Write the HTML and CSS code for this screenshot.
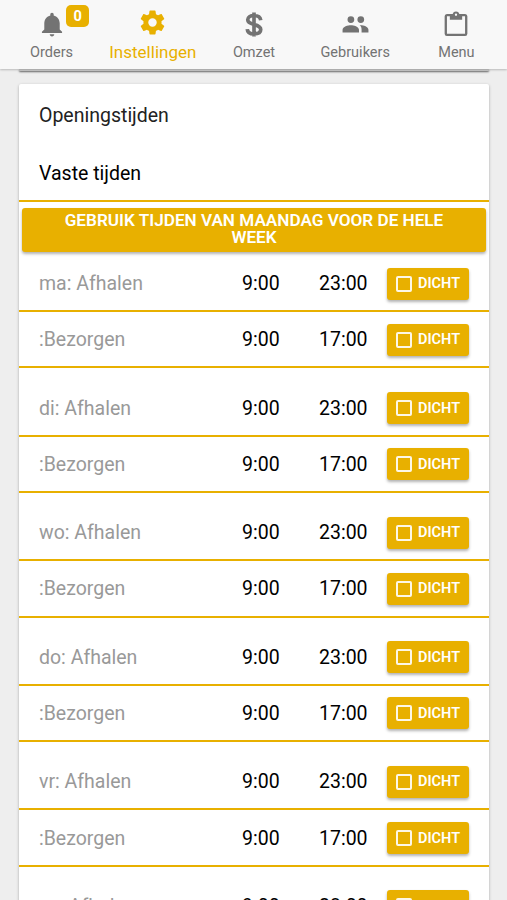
FILE: index.html
```html
<!DOCTYPE html>
<html lang="nl">
<head>
<meta charset="utf-8">
<meta name="viewport" content="width=device-width, initial-scale=1">
<title>Instellingen</title>
<link rel="stylesheet" href="styles.css">
</head>
<body>
<nav class="tabs">
  <a class="tab"><span class="icon-wrap"><svg class="icon bell" viewBox="0 0 512 512"><path d="M256 464c22.800 0 41-18 41-41h-82c0 23 18.200 41 41 41zM397 339V224c0-72-48-129-110-144V64c0-18-13-31-31-31s-31 13-31 31v16c-62 15-110 72-110 144v115l-43 42v20h368v-20z"/></svg><b class="badge">0</b></span><span class="label">Orders</span></a>
  <a class="tab active"><svg class="icon" viewBox="0 0 24 24"><path d="M19.430 12.980c.04-.32.07-.64.07-.98s-.03-.66-.07-.98l2.110-1.650c.19-.15.24-.42.12-.64l-2-3.460c-.12-.22-.39-.3-.61-.22l-2.490 1c-.52-.4-1.080-.73-1.690-.98l-.38-2.650C14.460 2.180 14.250 2 14 2h-4c-.25 0-.46.18-.49.42l-.38 2.650c-.61.25-1.170.59-1.690.98l-2.490-1c-.23-.09-.49 0-.61.22l-2 3.460c-.13.22-.07.49.12.64l2.110 1.650c-.04.32-.07.65-.07.98s.03.66.07.98l-2.110 1.650c-.19.15-.24.42-.12.64l2 3.460c.12.22.39.3.61.22l2.490-1c.52.4 1.080.73 1.690.98l.38 2.650c.03.24.24.42.49.42h4c.25 0 .46-.18.49-.42l.38-2.650c.61-.25 1.170-.59 1.690-.98l2.490 1c.23.09.49 0 .61-.22l2-3.460c.12-.22.07-.49-.12-.64zM12 15.500a3.500 3.500 0 1 1 0-7 3.500 3.500 0 0 1 0 7z"/></svg><span class="label">Instellingen</span></a>
  <a class="tab"><svg class="icon dollar" viewBox="0 0 24 28"><path d="M12 1.500v25M19 9.500C18.500 6 15.700 4.700 12 4.700c-3.900 0-6.500 1.700-6.500 4.500 0 3 2.500 3.900 6.500 4.800 4.400 1 7 2.200 7 5.200s-2.700 4.500-7 4.500c-4.200 0-6.800-1.700-7-5"/></svg><span class="label">Omzet</span></a>
  <a class="tab"><svg class="icon people" viewBox="0 0 24 24"><path d="M16.700 11a3 3 0 1 0 0-6 3 3 0 0 0 0 6zM7.900 11a3 3 0 1 0 0-6 3 3 0 0 0 0 6zM7.900 13C5.300 13 .5 14.300 .5 17v2.500h14.600V17c0-2.700-4.800-4-7.200-4zM16.700 13c-.3 0-.6 0-1 .05 1.200.9 1.700 2.200 1.700 3.950v2.500h6.100V17c0-2.700-4.400-4-6.800-4z"/></svg><span class="label">Gebruikers</span></a>
  <a class="tab"><svg class="icon clip" viewBox="0 0 24 27"><path fill-rule="evenodd" d="M21.500 3h-6A3.600 3.600 0 0 0 12 .6 3.600 3.600 0 0 0 8.500 3h-6A2.400 2.400 0 0 0 .2 5.400v18.200A2.400 2.400 0 0 0 2.500 26h19a2.400 2.400 0 0 0 2.300-2.400V5.400A2.400 2.400 0 0 0 21.500 3zM12 2.700a1.200 1.200 0 1 1 0 2.400 1.200 1.200 0 0 1 0-2.400zM21.400 23.600H2.600V5.400h3V9h12.800V5.400h3z"/></svg><span class="label">Menu</span></a>
</nav>
<main class="content">
  <section class="card card-prev"></section>
  <section class="card">
    <h1 class="title">Openingstijden</h1>
    <h2 class="subtitle">Vaste tijden</h2>
    <button class="copy">GEBRUIK TIJDEN VAN MAANDAG VOOR DE HELE WEEK</button>
    <div id="days"></div>
  </section>
</main>
<script src="script.js"></script>
</body>
</html>
```
FILE: styles.css
```css
* { box-sizing: border-box; }
body {
  margin: 0;
  height: 900px;
  overflow: hidden;
  background: #eee;
  font-family: Roboto, sans-serif;
  color: #000;
}
.tabs {
  position: relative;
  z-index: 1;
  display: flex;
  height: 69px;
  padding-left: 1px;
  background: #f8f8f8;
  box-shadow: 0 1px 2px rgba(0, 0, 0, .22);
}
.tab {
  flex: 1 1 0;
  min-width: 0;
  display: flex;
  flex-direction: column;
  align-items: center;
  padding-top: 10px;
  color: #737373;
  font-size: 14.500px;
}
.icon { display: block; width: 28px; height: 28px; fill: currentColor; }
.icon-wrap { position: relative; padding-left: 1px; }
.bell { position: relative; top: 1px; }
.tab.active { color: #e8b000; font-size: 17px; }
.tab.active .icon { margin-top: -2px; width: 29px; height: 29px; }
.tab.active .label { margin-top: 5px; }
.dollar { margin-top: 1px; height: 27px; fill: none; stroke: currentColor; stroke-width: 3.8; }
.people { width: 27px; }
.clip { margin-top: 1px; height: 26px; margin-bottom: 1px; }
.label { margin-top: 5px; line-height: 20px; }
.badge {
  position: absolute;
  left: 29px;
  top: -5px;
  width: 23px;
  height: 22px;
  border-radius: 5px;
  background: #e8b000;
  color: #fff;
  font-size: 14.6px;
  font-weight: 700;
  line-height: 23px;
  text-align: center;
}
.content { padding: 0 18px 0 19px; }
.card {
  height: 940px;
  background: #fff;
  border-radius: 2px;
  box-shadow: 0 1px 3px rgba(0, 0, 0, .3);
}
.card-prev { height: 2px; margin-bottom: 13px; background: #ccc; box-shadow: 0 1px 2px rgba(0, 0, 0, .6); }
.title, .subtitle {
  margin: 0;
  padding: 0 20px;
  font-size: 19.500px;
  font-weight: 400;
}
.title { height: 62px; line-height: 63px; color: #222; }
.subtitle { height: 56px; line-height: 55px; border-bottom: 2px solid #e8b000; }
.copy {
  display: block;
  width: calc(100% - 6px);
  height: 44px;
  margin: 5.500px 3px 4.500px;
  padding: 0 36px 2px;
  border: 0;
  border-radius: 3px;
  background: #e8b000;
  box-shadow: 0 2px 3px rgba(0, 0, 0, .3);
  color: #fff;
  font: 600 17.150px/17px Roboto, sans-serif;
}
.row {
  display: grid;
  grid-template-columns: 1fr 77px 68px 82px;
  align-items: center;
  height: 56.200px;
  padding: 0 20px;
  border-bottom: 2px solid #e8b000;
  font-size: 19.500px;
}
.row > span { padding-top: 1px; }
.day + .day { margin-top: 12.200px; }
.name { color: #999; }
.closed {
  display: flex;
  align-items: center;
  height: 32px;
  margin-top: 1px;
  padding: 0 9px;
  gap: 6px;
  border: 0;
  border-radius: 3px;
  background: #e8b000;
  box-shadow: 0 2px 3px rgba(0, 0, 0, .3);
  color: #fff;
  font: 600 14.500px Roboto, sans-serif;
  white-space: nowrap;
}
.box { flex: none; width: 16px; height: 16px; border: 2px solid #fff; border-radius: 2px; opacity: .9; }
```
FILE: script.js
```js
const row = (name, from, to) => `
  <div class="row">
    <span class="name">${name}</span><span>${from}</span><span>${to}</span>
    <button class="closed"><span class="box"></span>DICHT</button>
  </div>`;

document.getElementById("days").innerHTML = ["ma", "di", "wo", "do", "vr"]
  .map(day => `<div class="day">${row(`${day}: Afhalen`, "9:00", "23:00")}${row(":Bezorgen", "9:00", "17:00")}</div>`)
  .join("") + `<div class="day">${row("za: Afhalen", "9:00", "23:00")}</div>`;
```
